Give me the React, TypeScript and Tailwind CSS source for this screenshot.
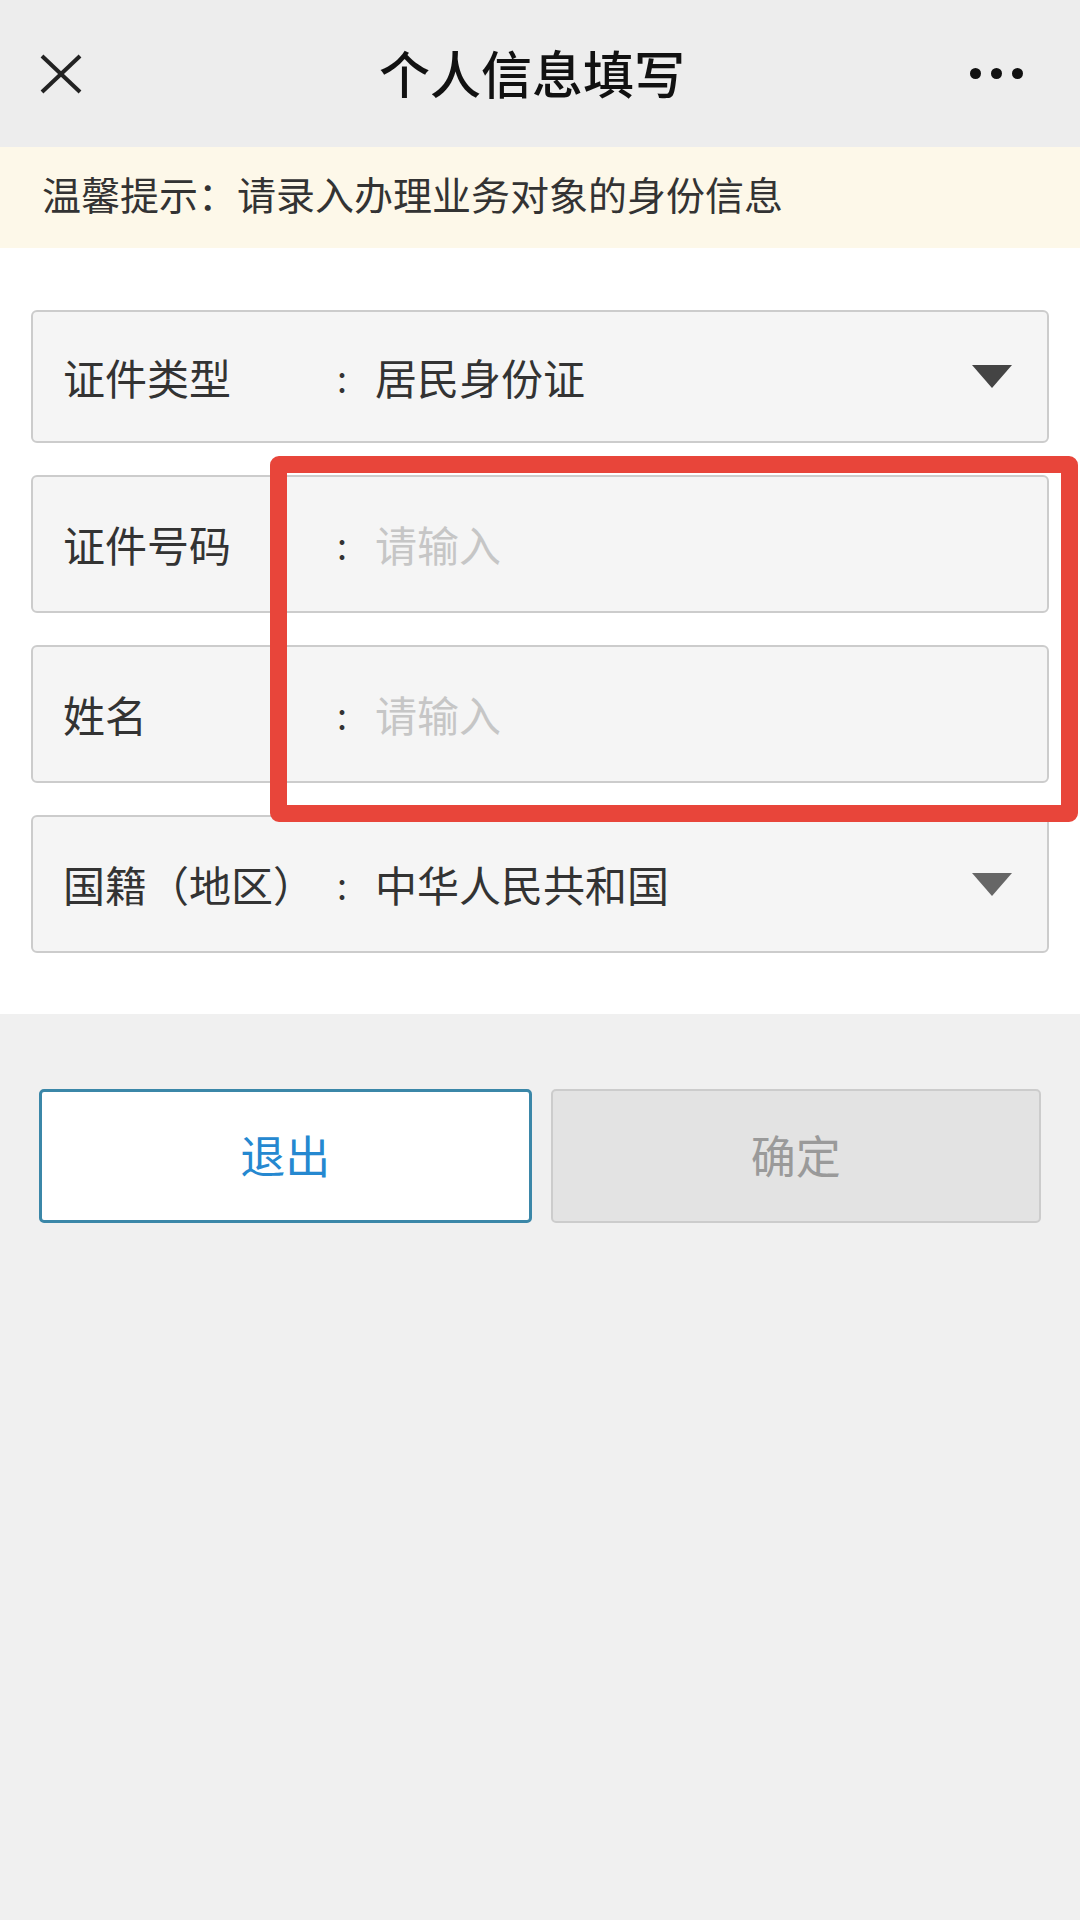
import React from "react";

const FONT = { fontFamily: '"Noto Sans CJK SC", "Noto Sans", sans-serif' };

function Triangle({ color }: { color: string }) {
  return (
    <svg width="40" height="23" viewBox="0 0 40 23">
      <polygon points="0,0 40,0 20,23" fill={color} />
    </svg>
  );
}

function Field({
  label,
  value,
  placeholder,
  arrow,
  h,
}: {
  label: string;
  value?: string;
  placeholder?: string;
  arrow?: string;
  h: string;
}) {
  return (
    <div
      className={`${h} border-2 border-[#cccccc] rounded-[6px] bg-[#f5f5f5] flex items-center pl-[30px] pr-[35px]`}
    >
      <div className="w-[259px] text-[42px] text-[#333333] leading-none whitespace-nowrap">{label}</div>
      <div className="w-[40px] text-center text-[36px] text-[#333333] leading-none">:</div>
      <div
        className={`ml-[13px] flex-1 text-[42px] leading-none whitespace-nowrap ${
          value ? "text-[#333333]" : "text-[#c6c6c6]"
        }`}
      >
        {value ?? placeholder}
      </div>
      {arrow && <Triangle color={arrow} />}
    </div>
  );
}

export default function App() {
  return (
    <div className="relative w-[1080px] min-h-[1920px] bg-[#f0f0f0]" style={FONT}>
      {/* Header */}
      <div className="h-[147px] bg-[#ededed] grid grid-cols-[1fr_auto_1fr] items-center">
        <div className="pl-[40px] flex items-center">
          <svg width="42" height="40" viewBox="0 0 42 40">
            <line x1="2" y1="2" x2="40" y2="38" stroke="#222" strokeWidth="4" />
            <line x1="40" y1="2" x2="2" y2="38" stroke="#222" strokeWidth="4" />
          </svg>
        </div>
        <div className="text-[51px] font-medium text-[#111111] leading-none pb-[2px] mr-[16px]">个人信息填写</div>
        <div className="flex justify-end pr-[57px] gap-[10px]">
          <span className="w-[11px] h-[11px] rounded-full bg-[#111111]" />
          <span className="w-[11px] h-[11px] rounded-full bg-[#111111]" />
          <span className="w-[11px] h-[11px] rounded-full bg-[#111111]" />
        </div>
      </div>

      {/* Notice */}
      <div className="h-[101px] bg-[#fdf8e9] flex items-center pl-[42px] pb-[8px]">
        <span className="text-[39px] text-[#333333] leading-none">温馨提示：请录入办理业务对象的身份信息</span>
      </div>

      {/* Form */}
      <div className="bg-white pt-[62px] pb-[61px] pl-[31px] pr-[31px] flex flex-col gap-[32px]">
        <Field h="h-[133px]" label="证件类型" value="居民身份证" arrow="#444444" />
        <Field h="h-[138px]" label="证件号码" placeholder="请输入" />
        <Field h="h-[138px]" label="姓名" placeholder="请输入" />
        <Field h="h-[138px]" label="国籍（地区）" value="中华人民共和国" arrow="#666666" />
      </div>

      {/* Buttons */}
      <div className="flex gap-[19px] px-[39px] pt-[75px]">
        <button className="flex-1 h-[134px] bg-white border-[3px] border-[#3b87a8] rounded-[5px] text-[45px] text-[#2588d0] leading-none pb-[4px]">
          退出
        </button>
        <button className="flex-1 h-[134px] bg-[#e3e3e3] border-2 border-[#cccccc] rounded-[5px] text-[45px] text-[#9a9a9a] leading-none pb-[4px]">
          确定
        </button>
      </div>

      {/* Annotation overlay */}
      <div className="absolute left-[270px] top-[456px] w-[808px] h-[366px] border-[17px] border-[#e8453a] rounded-[9px] pointer-events-none" />
    </div>
  );
}
